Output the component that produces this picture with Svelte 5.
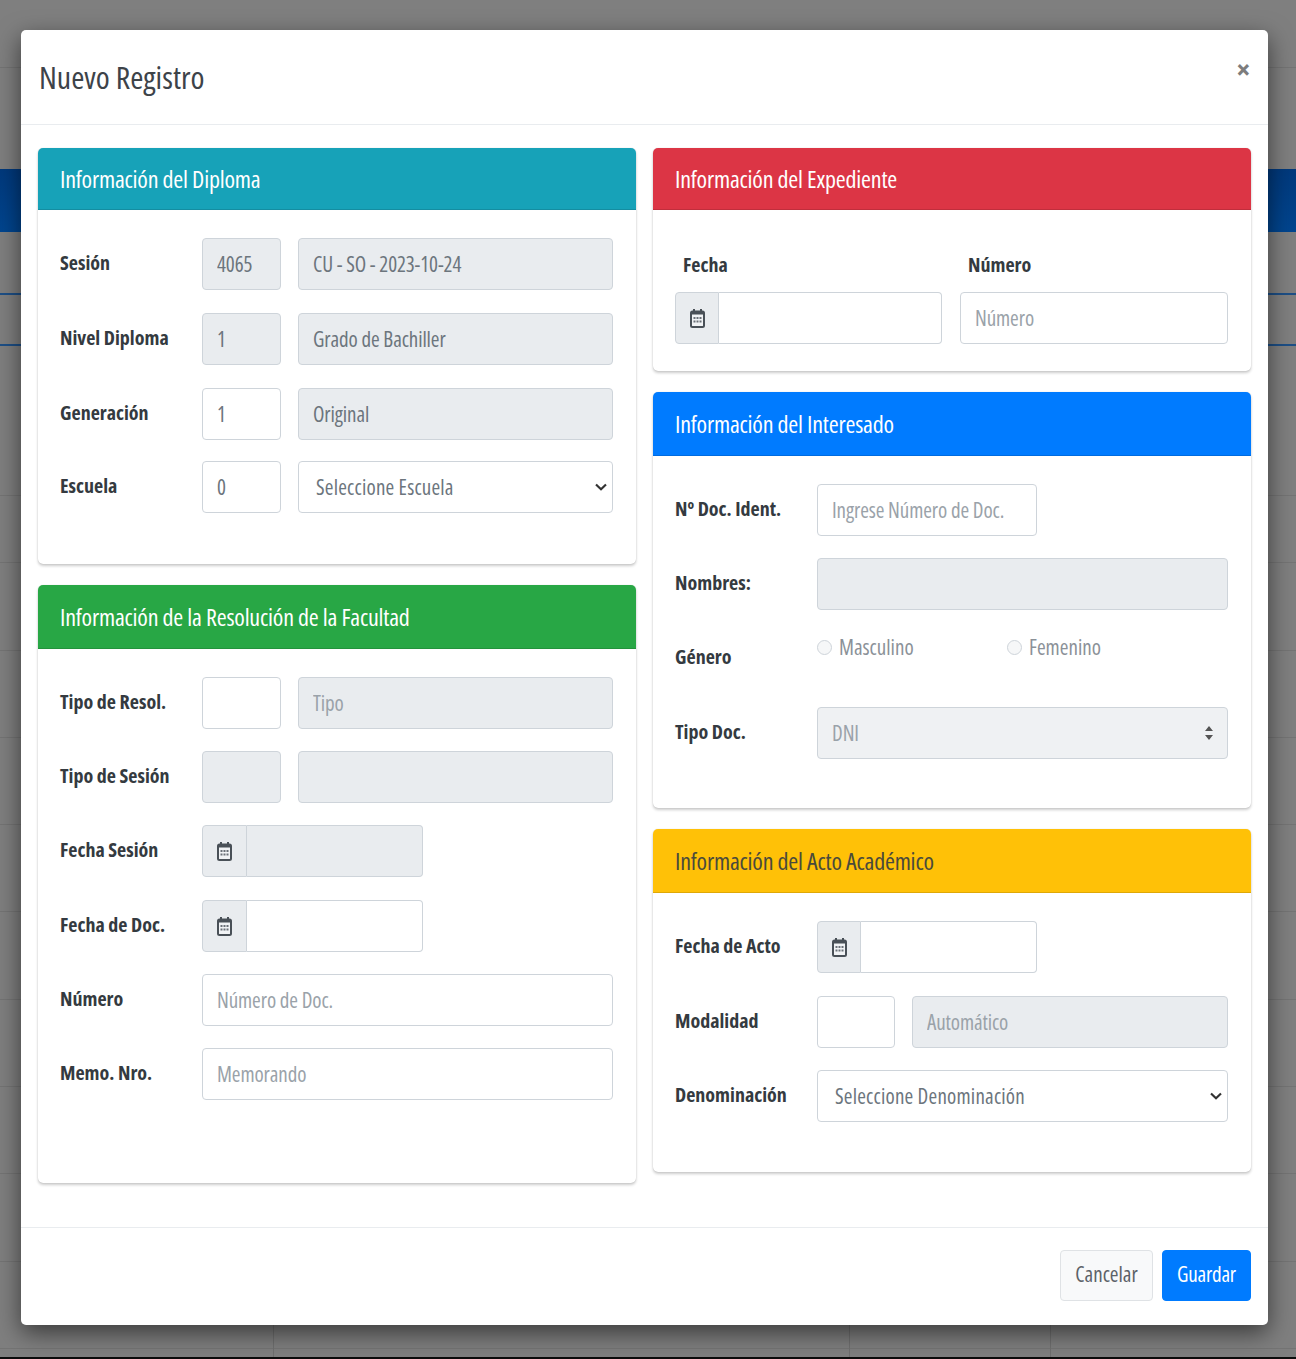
<script>
</script>

{#snippet date(cls, dis)}
  <div class="dategroup {cls}">
    <span class="addon">
      <svg viewBox="0 0 15 20" width="15" height="20">
        <rect x="1" y="3.500" width="13" height="15.500" rx="1.500" fill="#f1f3f5" stroke="#495057" stroke-width="2"/>
        <rect x="1" y="3" width="13" height="3.500" fill="#495057"/>
        <rect x="3" y="1" width="2" height="3" fill="#495057"/>
        <rect x="10" y="1" width="2" height="3" fill="#495057"/>
        <path d="M3.500 9h2v2h-2zM6.500 9h2v2h-2zM9.500 9h2v2h-2zM3.500 12.500h2v2h-2zM6.500 12.500h2v2h-2zM9.500 12.500h2v2h-2z" fill="#6b7178"/>
      </svg>
    </span>
    <input class="ctl joined" disabled={dis} />
  </div>
{/snippet}

<div class="page">
  <div class="modal">
    <header class="mhead">
      <h5>Nuevo Registro</h5>
      <span class="close">×</span>
    </header>
    <div class="mbody">
      <div class="col">
        <section class="card c1">
          <h6 class="chead info">Información del Diploma</h6>
          <div class="cbody">
            <div class="row"><label>Sesión</label><input class="ctl short" disabled value="4065" /><input class="ctl grow" disabled value="CU - SO - 2023-10-24" /></div>
            <div class="row"><label>Nivel Diploma</label><input class="ctl short" disabled value="1" /><input class="ctl grow" disabled value="Grado de Bachiller" /></div>
            <div class="row"><label>Generación</label><input class="ctl short" value="1" /><input class="ctl grow" disabled value="Original" /></div>
            <div class="row"><label>Escuela</label><input class="ctl short" value="0" /><select class="ctl grow sel"><option>Seleccione Escuela</option></select></div>
          </div>
        </section>
        <section class="card c2">
          <h6 class="chead success tall">Información de la Resolución de la Facultad</h6>
          <div class="cbody">
            <div class="row"><label>Tipo de Resol.</label><input class="ctl short" /><input class="ctl grow" disabled placeholder="Tipo" /></div>
            <div class="row"><label>Tipo de Sesión</label><input class="ctl short" disabled /><input class="ctl grow" disabled /></div>
            <div class="row"><label>Fecha Sesión</label>{@render date("w221", true)}</div>
            <div class="row"><label>Fecha de Doc.</label>{@render date("w221", false)}</div>
            <div class="row"><label>Número</label><input class="ctl grow" placeholder="Número de Doc." /></div>
            <div class="row"><label>Memo. Nro.</label><input class="ctl grow" placeholder="Memorando" /></div>
          </div>
        </section>
      </div>
      <div class="col">
        <section class="card c3">
          <h6 class="chead danger">Información del Expediente</h6>
          <div class="cbody exp">
            <div class="expcol first"><label>Fecha</label>{@render date("wfull", false)}</div>
            <div class="expcol second"><label>Número</label><input class="ctl" placeholder="Número" /></div>
          </div>
        </section>
        <section class="card c4">
          <h6 class="chead primary tall">Información del Interesado</h6>
          <div class="cbody">
            <div class="row"><label>Nº Doc. Ident.</label><input class="ctl w220" placeholder="Ingrese Número de Doc." /></div>
            <div class="row"><label>Nombres:</label><input class="ctl grow" disabled /></div>
            <div class="row radios">
              <label>Género</label>
              <span class="radio"><i></i>Masculino</span>
              <span class="radio"><i></i>Femenino</span>
            </div>
            <div class="row"><label>Tipo Doc.</label><select class="ctl grow custom" disabled><option>DNI</option></select></div>
          </div>
        </section>
        <section class="card c5">
          <h6 class="chead warning tall">Información del Acto Académico</h6>
          <div class="cbody">
            <div class="row"><label>Fecha de Acto</label>{@render date("w220d", false)}</div>
            <div class="row"><label>Modalidad</label><input class="ctl short s78" /><input class="ctl grow" disabled placeholder="Automático" /></div>
            <div class="row"><label>Denominación</label><select class="ctl grow sel"><option>Seleccione Denominación</option></select></div>
          </div>
        </section>
      </div>
    </div>
    <footer class="mfoot">
      <button class="btn light">Cancelar</button>
      <button class="btn blue">Guardar</button>
    </footer>
  </div>
</div>

<style>
  :global(body) { margin: 0; background: #7f7f7f; }
  .page {
    box-sizing: border-box; height: 1359px; overflow: hidden;
    padding: 30px 28px 0 21px;
    font-family: "Open Sans", "Noto Sans", sans-serif;
    font-stretch: 75%;
    background:
      linear-gradient(#0c0c0c, #0c0c0c) 0 1357px / 100% 2px no-repeat,
      linear-gradient(#6f6f6f, #6f6f6f) 273px 1325px / 1px 32px no-repeat,
      linear-gradient(#6f6f6f, #6f6f6f) 849px 1325px / 1px 32px no-repeat,
      linear-gradient(#6f6f6f, #6f6f6f) 1050px 1325px / 1px 32px no-repeat,
      linear-gradient(#00397c, #00458f) 0 169px / 100% 63px no-repeat,
      linear-gradient(#1d4f86, #1d4f86) 0 293px / 100% 2px no-repeat,
      linear-gradient(#1d4f86, #1d4f86) 0 344px / 100% 2px no-repeat,
      linear-gradient(#747474, #747474) 0 67px / 100% 1px no-repeat,
      linear-gradient(#747474, #747474) 0 495px / 100% 1px no-repeat,
      repeating-linear-gradient(#7f7f7f 0 86.300px, #747474 86.300px 87.300px) 0 476px / 100% 100% no-repeat,
      #7f7f7f;
  }
  .modal {
    width: 1247px; height: 1295px; box-sizing: border-box;
    background: #fff; border-radius: 5px;
    box-shadow: 0 8px 24px rgba(0,0,0,.55);
    display: flex; flex-direction: column;
  }
  .mhead {
    height: 95px; box-sizing: border-box; flex: none;
    border-bottom: 1px solid #e9ecef;
    padding: 26px 18px 0 18px;
    display: flex; justify-content: space-between; align-items: flex-start;
  }
  h5 { margin: 0; font-size: 31.800px; line-height: 42px; font-weight: 400; color: #3d4349; }
  .close { font-size: 28px; line-height: 26px; margin-top: 0; font-weight: 700; color: #7d7d7d; }
  .mbody {
    flex: 1; display: grid; grid-template-columns: 598px 598px; column-gap: 17px;
    padding: 23px 17px 0;
    align-items: start;
  }
  .col { display: flex; flex-direction: column; gap: 21px; }
  .card {
    background: #fff; border-radius: 5px; box-sizing: border-box;
    box-shadow: 0 0 1px rgba(0,0,0,.2), 0 2px 3px rgba(0,0,0,.2);
  }
  .c1 { height: 416px; } .c2 { height: 598px; } .c3 { height: 223px; } .c4 { height: 416px; } .c5 { height: 343px; }
  .chead {
    margin: 0; height: 62px; line-height: 62px; padding: 0 22px;
    font-size: 24px; font-weight: 500; letter-spacing: -.2px; color: #fff; border-radius: 5px 5px 0 0;
    box-sizing: border-box; border-bottom: 1px solid rgba(0,0,0,.125);
  }
  .tall { height: 64px; line-height: 64px; }
  .info { background: #17a2b8; } .success { background: #28a745; } .danger { background: #dc3545; }
  .primary { background: #007bff; } .warning { background: #ffc107; color: #4a4a3c; font-weight: 400; }
  .cbody { padding: 28px 23px 0 22px; }
  .row { display: flex; gap: 17px; height: 52px; margin-bottom: 22.200px; align-items: center; }
  .c1 .row:nth-child(-n+2) { margin-bottom: 23px; }
  .c1 .row:nth-child(3) { margin-bottom: 21px; }
  .c5 .row:first-child { margin-bottom: 23px; }
  label { font-size: 20px; font-weight: 700; color: #343a40; }
  .row > label { width: 125px; flex: none; margin-top: -3px; }
  .ctl {
    box-sizing: border-box; height: 52px; min-width: 0;
    border: 1px solid #ced4da; border-radius: 4px; background: #fff;
    padding: 0 14px; font: inherit; font-stretch: 75%; font-size: 21px; letter-spacing: -.1px; color: #6c757d;
    outline: none;
  }
  .ctl:disabled { background: #e9ecef; opacity: 1; color: #6c757d; -webkit-text-fill-color: #6c757d; }
  .ctl::placeholder { color: #9aa2a9; opacity: 1; -webkit-text-fill-color: #9aa2a9; }
  .sel {
    appearance: none; padding-left: 17px; letter-spacing: .2px;
    background-image: url("data:image/svg+xml,%3csvg xmlns='http://www.w3.org/2000/svg' width='12' height='8'%3e%3cpath fill='none' stroke='%23333' stroke-width='2.200' d='M1 1.500 L6 6.200 L11 1.500'/%3e%3c/svg%3e");
    background-repeat: no-repeat; background-position: right 5px center;
  }
  .short { width: 79px; flex: none; }
  .s78 { width: 78px; }
  .grow { flex: 1; }
  .w220 { width: 220px; }
  .custom:disabled {
    appearance: none; background-color: #eff1f3; color: #9aa2a9; -webkit-text-fill-color: #9aa2a9;
    background-image: url("data:image/svg+xml,%3csvg xmlns='http://www.w3.org/2000/svg' width='10' height='14'%3e%3cpath fill='%23555' d='M5 0 L9 5 H1zM5 14 L1 9 H9z'/%3e%3c/svg%3e");
    background-repeat: no-repeat; background-position: right 13px center;
  }
  .dategroup { display: flex; height: 52px; }
  .w221 { width: 221px; }
  .w221 .addon { width: 45px; }
  .w220d { width: 220px; }
  .wfull { width: 100%; }
  .addon {
    width: 44px; flex: none; box-sizing: border-box;
    display: flex; align-items: center; justify-content: center;
    background: #e9ecef; border: 1px solid #ced4da; border-radius: 4px 0 0 4px;
  }
  .joined { flex: 1; width: 0; border-left: 0; border-radius: 0 4px 4px 0; }
  .exp { display: flex; gap: 18px; }
  .exp label { display: block; height: 54px; line-height: 54px; padding-left: 8px; }
  .expcol.first { width: 267px; }
  .expcol.second { flex: 1; }
  .expcol .ctl:not(.joined) { width: 100%; }
  .radios { align-items: flex-start; height: 52.800px; gap: 0; }
  .radios > label { margin-top: 11px; width: 142px; }
  .radio { display: inline-flex; align-items: center; gap: 7px; font-size: 21px; color: #8b9198; width: 190px; height: 24px; margin-top: 3px; }
  .radio i { width: 15px; height: 15px; border-radius: 50%; border: 1px solid #ced4da; background: #f6f7f8; box-sizing: border-box; }
  .mfoot {
    height: 98px; box-sizing: border-box; flex: none;
    border-top: 1px solid #e9ecef;
    padding: 22px 17px 0; display: flex; justify-content: flex-end; gap: 9px; align-items: flex-start;
  }
  .btn { height: 51px; border-radius: 4px; font: inherit; font-stretch: 75%; font-size: 21px; padding: 0 0 3px; }
  .light { background: #f8f9fa; border: 1px solid #dfe2e5; color: #5c6268; width: 93px; }
  .blue { background: #007bff; border: 1px solid #007bff; color: #fff; font-weight: 500; letter-spacing: -.2px; width: 89px; }
</style>
